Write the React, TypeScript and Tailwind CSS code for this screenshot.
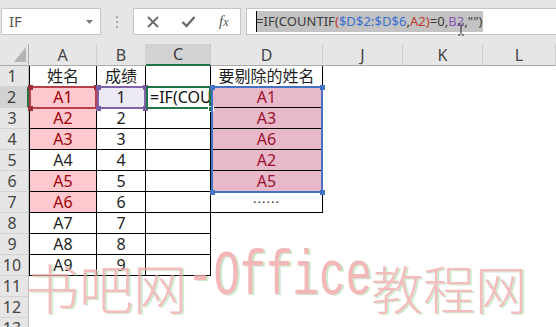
import React from "react";

const W = ["w-[29px]", "w-[68px]", "w-[49px]", "w-[65px]", "w-[112px]", "w-[80px]", "w-[80px]", "flex-1"];
const HEAD = ["", "A", "B", "C", "D", "J", "K", "L"];
const A = ["姓名", "A1", "A2", "A3", "A4", "A5", "A6", "A7", "A8", "A9"];
const B = ["成绩", "1", "2", "3", "4", "5", "6", "7", "8", "9"];
const D = ["要剔除的姓名", "A1", "A3", "A6", "A2", "A5", "......"];
const PINK_A = [2, 3, 4, 6, 7];

function cellText(col: number, r: number): string {
  if (col === 1) return A[r - 1] ?? "";
  if (col === 2) return B[r - 1] ?? "";
  if (col === 3 && r === 2) return "=IF(COUNTIF($D$2:$D$6,A2)=0,B2,\"\")";
  if (col === 4) return D[r - 1] ?? "";
  return "";
}

function Cell({ col, r }: { col: number; r: number }) {
  const t1 = col >= 1 && col <= 3 && r <= 10;
  const t2 = col === 4 && r <= 7;
  let cls = "h-full shrink-0 box-border flex items-center overflow-hidden whitespace-nowrap " + W[col];
  if (t1 || t2) cls += " border-r border-b border-black";
  if (col === 1 && t1) cls += " border-l";
  if (col === 3 && r === 2) cls += " justify-start pl-[4px] text-[#111]";
  else cls += " justify-center";
  if (col === 1 && PINK_A.includes(r)) cls += " bg-[#ffc7ce] text-[#9c0006]";
  else if (col === 2 && r === 2) cls += " bg-[#ece8f4] text-[#222]";
  else if (col === 4 && r >= 2 && r <= 6) cls += " bg-[#e8b9c8] text-[#9c1030]";
  else cls += " text-[#1e1e1e]";
  const txt = cellText(col, r);
  return (
    <div className={cls}>
      {col === 4 && r === 7 ? <span className="text-[13px] tracking-[1px] text-[#333] pb-[6px]">......</span> : txt}
    </div>
  );
}

function Handle({ x, y, c }: { x: number; y: number; c: string }) {
  return <div className={"absolute w-[5px] h-[5px] " + c} style={{ left: x - 2, top: y - 2 }} />;
}

const CJK = { fontFamily: '"Noto Sans CJK SC", sans-serif' };
const MONO = { fontFamily: '"Liberation Mono", monospace' };

export default function App() {
  const rows = Array.from({ length: 13 }, (_, i) => i + 1);
  return (
    <div
      className="w-[556px] h-[327px] overflow-hidden bg-white relative"
      style={{ fontFamily: '"Noto Sans", "Noto Sans CJK SC", sans-serif' }}
    >
      {/* toolbar */}
      <div className="h-[44px] bg-[#e6e6e6] flex items-start pt-[8px]">
        <div className="ml-[1px] w-[100px] h-[27px] bg-white border border-[#c6c6c6] flex items-center justify-between pl-[7px] pr-[7px]">
          <span className="text-[15px] text-[#555] leading-none">IF</span>
          <svg width="7" height="4" viewBox="0 0 7 4">
            <path d="M0 0 L7 0 L3.5 4 Z" fill="#7a7a7a" />
          </svg>
        </div>
        <div className="w-[32px] h-[27px] flex flex-col items-center justify-center gap-[3px]">
          <div className="w-[2px] h-[2px] bg-[#a8a8a8]" />
          <div className="w-[2px] h-[2px] bg-[#a8a8a8]" />
          <div className="w-[2px] h-[2px] bg-[#a8a8a8]" />
        </div>
        <div className="w-[108px] h-[27px] bg-white border border-[#c6c6c6] flex items-center">
          <svg width="14" height="14" viewBox="0 0 14 14" className="ml-[12px]">
            <path d="M2 2 L12 12 M12 2 L2 12" stroke="#6a6a6a" strokeWidth="1.8" />
          </svg>
          <svg width="15" height="13" viewBox="0 0 15 13" className="ml-[21px]">
            <path d="M1.5 7 L5.5 11 L13.5 2" stroke="#6a6a6a" strokeWidth="2.4" fill="none" />
          </svg>
          <span
            className="ml-[23px] text-[15px] italic text-[#555] leading-none"
            style={{ fontFamily: '"Liberation Serif", serif' }}
          >
            f<span className="text-[12px]">x</span>
          </span>
        </div>
        <div className="ml-[5px] flex-1 h-[27px] bg-white border border-r-0 border-[#c6c6c6] flex items-center pl-[9px] relative">
          <div className="h-[21px] bg-[#c3c3c3] flex items-center text-[13px] text-[#3a3a3a] tracking-[0.05px] pr-[1px] relative">
            <div className="absolute left-0 top-0 w-[1px] h-[21px] bg-black" />
            <span>=IF(COUNTIF</span>
            <span className="text-[#c0392b]">(</span>
            <span className="text-[#3b6fd1]">$D$2:$D$6</span>
            <span>,</span>
            <span className="text-[#c0392b]">A2)</span>
            <span>=0,</span>
            <span className="text-[#8a54b5]">B2</span>
            <span>,"")</span>
          </div>
          <svg width="8" height="13" viewBox="0 0 8 13" className="absolute left-[210px] top-[14px]">
            <path d="M1 1 H3 M5 1 H7 M4 1.5 V11.5 M1 12 H3 M5 12 H7" stroke="#222" strokeWidth="1" fill="none" />
          </svg>
        </div>
      </div>

      {/* grid */}
      <div className="relative">
        {/* header */}
        <div className="h-[22px] flex bg-[#e6e6e6]">
          {HEAD.map((h, i) => {
            if (i === 0)
              return (
                <div key={i} className={"h-full shrink-0 box-border border-b border-r border-[#ababab] relative " + W[0]}>
                  <svg width="13" height="16" viewBox="0 0 13 16" className="absolute left-[14px] top-[3px]">
                    <path d="M12 0 L12 15 L0 15 Z" fill="#b4b4b4" />
                  </svg>
                </div>
              );
            const sel = i === 3;
            return (
              <div
                key={i}
                className={
                  "h-full shrink-0 box-border flex items-center justify-center text-[16px] " +
                  W[i] +
                  (sel
                    ? " bg-[#d2d2d2] border-b-2 border-b-[#217346] border-r border-r-[#c8c8c8] text-[#3a3a3a]"
                    : " border-b border-b-[#ababab] border-r border-r-[#d0d0d0] text-[#444]")
                }
              >
                {h}
              </div>
            );
          })}
        </div>
        {rows.map((r) => (
          <div key={r} className="h-[21px] flex text-[16px]">
            <div
              className={
                "h-full shrink-0 box-border flex items-center justify-center pr-[4px] text-[16px] " +
                W[0] +
                (r === 2
                  ? " bg-[#d2d2d2] border-r-2 border-r-[#217346] border-b border-b-[#d4d4d4] text-[#3a3a3a]"
                  : " bg-[#e6e6e6] border-r border-r-[#bdbdbd] border-b border-b-[#d4d4d4] text-[#444]")
              }
            >
              {r}
            </div>
            {[1, 2, 3, 4, 5, 6, 7].map((c) => (
              <Cell key={c} col={c} r={r} />
            ))}
          </div>
        ))}

        {/* selection overlays */}
        <div className="absolute left-[29px] top-[42px] w-[68px] h-[23px] border-2 border-[#b8404c]" />
        <Handle x={30} y={43} c="bg-[#9e2f3a]" />
        <Handle x={96} y={43} c="bg-[#9e2f3a]" />
        <Handle x={30} y={64} c="bg-[#9e2f3a]" />
        <div className="absolute left-[97px] top-[42px] w-[49px] h-[23px] border-2 border-[#8064a8]" />
        <Handle x={98} y={43} c="bg-[#7a5ca3]" />
        <Handle x={145} y={43} c="bg-[#7a5ca3]" />
        <Handle x={98} y={64} c="bg-[#7a5ca3]" />
        <Handle x={145} y={64} c="bg-[#7a5ca3]" />
        <div className="absolute left-[146px] top-[42px] w-[65px] h-[23px] border-2 border-[#217346]" />
        <div className="absolute left-[208px] top-[62px] w-[6px] h-[6px] bg-[#217346] border border-white" />
        <div className="absolute left-[211px] top-[42px] w-[112px] h-[107px] border-2 border-[#4472c4]" />
        <Handle x={212} y={43} c="bg-[#4472c4]" />
        <Handle x={322} y={43} c="bg-[#4472c4]" />
        <Handle x={212} y={148} c="bg-[#4472c4]" />
        <Handle x={322} y={148} c="bg-[#4472c4]" />
      </div>

      {/* watermark */}
      <div
        className="absolute left-[25px] top-[244px] w-[540px] h-[70px] flex items-end leading-none whitespace-nowrap pointer-events-none text-[#f1a6a6]"
        style={{ textShadow: "2px 1px 0 rgba(140,205,140,0.55)" }}
      >
        <div className="shrink-0 w-[162px] text-[54px] font-light opacity-75" style={CJK}>
          书吧网
        </div>
        <div className="shrink-0 w-[184px] h-[62px] flex items-end opacity-80">
          <span className="inline-block text-[44px] origin-bottom scale-y-[1.45] mb-[6px]" style={MONO}>
            -Office
          </span>
        </div>
        <div className="shrink-0 w-[162px] text-[52px] font-light opacity-75" style={CJK}>
          教程网
        </div>
      </div>
    </div>
  );
}
